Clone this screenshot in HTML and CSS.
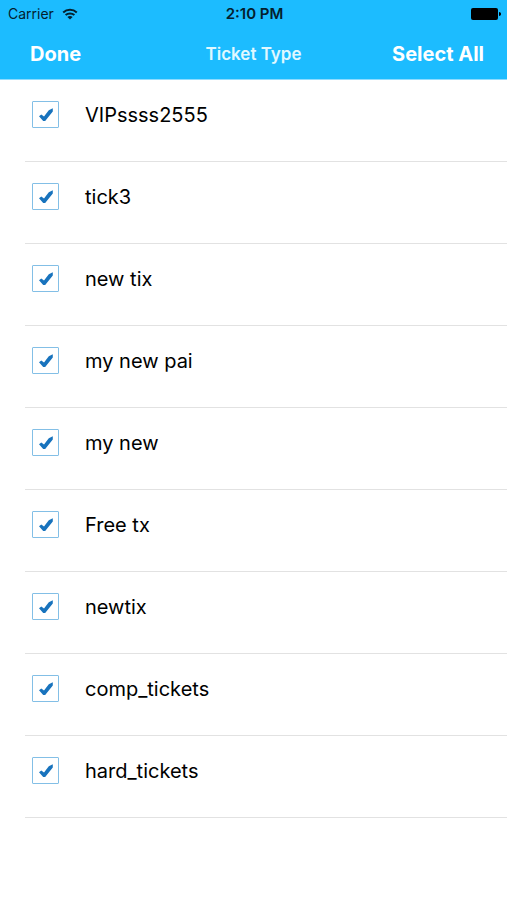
FILE: index.html
```html
<!DOCTYPE html>
<html lang="en">
<head>
<meta charset="utf-8">
<meta name="viewport" content="width=device-width, initial-scale=1">
<title>Ticket Type</title>
<link rel="stylesheet" href="styles.css">
</head>
<body>
<svg class="defs" aria-hidden="true">
  <symbol id="tick" viewBox="0 0 27 27">
    <path d="M7 15.2 9.3 13.4 12 15.4 16.8 9.3 20.8 7.2V10.4L13.2 20H11.2Z"/>
  </symbol>
</svg>
<header class="header">
  <div class="status">
    <div class="carrier">
      <span>Carrier</span>
      <svg class="wifi" viewBox="0 0 16 12" aria-hidden="true">
        <path d="M1.2 4.4C5 .8 11 .8 14.8 4.4M3.6 7.1C6.1 4.8 9.9 4.8 12.4 7.1" fill="none" stroke="currentColor" stroke-width="2"/>
        <path d="M5.4 8.9C6.9 7.6 9.1 7.6 10.6 8.9L8 11.6Z" fill="currentColor"/>
      </svg>
    </div>
    <span class="time">2:10 PM</span>
    <svg class="battery" viewBox="0 0 30 12" aria-hidden="true">
      <rect width="27" height="12" rx="2"/>
      <path d="M28 4C30.7 4 30.7 8 28 8Z"/>
    </svg>
  </div>
  <nav class="nav">
    <button class="action action-start" type="button">Done</button>
    <h1 class="title">Ticket Type</h1>
    <button class="action action-end" type="button">Select All</button>
  </nav>
</header>
<main>
  <ul class="list">
    <li class="row"><label class="option"><span class="check"><input type="checkbox" checked><svg aria-hidden="true"><use href="#tick"/></svg></span><span>VIPssss2555</span></label></li>
    <li class="row"><label class="option"><span class="check"><input type="checkbox" checked><svg aria-hidden="true"><use href="#tick"/></svg></span><span>tick3</span></label></li>
    <li class="row"><label class="option"><span class="check"><input type="checkbox" checked><svg aria-hidden="true"><use href="#tick"/></svg></span><span>new tix</span></label></li>
    <li class="row"><label class="option"><span class="check"><input type="checkbox" checked><svg aria-hidden="true"><use href="#tick"/></svg></span><span>my new pai</span></label></li>
    <li class="row"><label class="option"><span class="check"><input type="checkbox" checked><svg aria-hidden="true"><use href="#tick"/></svg></span><span>my new</span></label></li>
    <li class="row"><label class="option"><span class="check"><input type="checkbox" checked><svg aria-hidden="true"><use href="#tick"/></svg></span><span>Free tx</span></label></li>
    <li class="row"><label class="option"><span class="check"><input type="checkbox" checked><svg aria-hidden="true"><use href="#tick"/></svg></span><span>newtix</span></label></li>
    <li class="row"><label class="option"><span class="check"><input type="checkbox" checked><svg aria-hidden="true"><use href="#tick"/></svg></span><span>comp_tickets</span></label></li>
    <li class="row"><label class="option"><span class="check"><input type="checkbox" checked><svg aria-hidden="true"><use href="#tick"/></svg></span><span>hard_tickets</span></label></li>
  </ul>
</main>
</body>
</html>
```
FILE: styles.css
```css
* {
  box-sizing: border-box;
}

body {
  margin: 0;
  background: #fff;
  color: #000;
  font-family: Inter, "Liberation Sans", sans-serif;
}

.defs {
  display: none;
}

.header {
  background: #1cbcff;
}

.status,
.nav {
  display: grid;
  grid-template-columns: 1fr auto 1fr;
  align-items: center;
}

.status {
  height: 28px;
  padding: 0 6px 0 8px;
  color: #04202e;
  font-size: 14px;
  line-height: 20px;
}

.carrier {
  display: flex;
  align-items: center;
  gap: 8px;
}

.wifi {
  width: 16px;
  height: 12px;
}

.time {
  font-size: 15px;
  font-weight: 600;
}

.battery {
  justify-self: end;
  width: 30px;
  height: 12px;
  fill: #000;
}

.nav {
  height: 52px;
  padding: 0 23px;
  border-bottom: 1px solid #8fdcff;
  color: #fff;
}

.action {
  padding: 0;
  border: 0;
  background: none;
  color: inherit;
  font: 700 20px/28px Inter, "Liberation Sans", sans-serif;
}

.action-start {
  justify-self: start;
  padding-left: 7px;
}

.action-end {
  justify-self: end;
}

.title {
  margin: 0;
  color: #e0f8ff;
  font-size: 17px;
  font-weight: 600;
  line-height: 24px;
}

.list {
  margin: 0;
  padding: 0 0 0 25px;
  list-style: none;
}

.row {
  height: 82px;
  padding: 21px 0 0 7px;
  border-bottom: 1px solid #e2e2e2;
}

.option {
  display: flex;
  align-items: flex-start;
  gap: 26px;
  font-size: 20px;
  line-height: 29px;
}

.check {
  display: grid;
  width: 27px;
  height: 27px;
}

.check input,
.check svg {
  grid-area: 1 / 1;
  width: 100%;
  height: 100%;
  margin: 0;
}

.check input {
  appearance: none;
  border: 1px solid #83bfe6;
  border-radius: 1px;
  background: #fff;
}

.check svg {
  visibility: hidden;
  fill: #1873bd;
  pointer-events: none;
}

.check input:checked + svg {
  visibility: visible;
}
```
